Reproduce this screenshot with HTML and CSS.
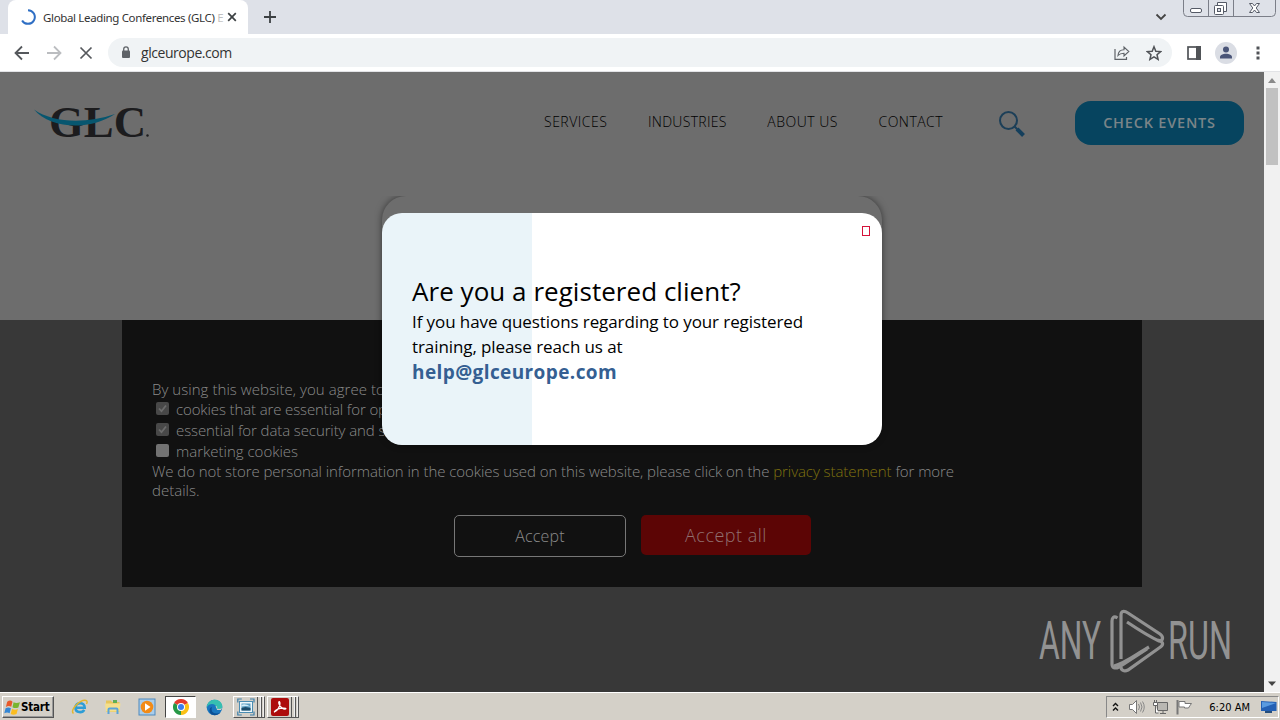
FILE: index.html
```html
<!DOCTYPE html>
<html lang="en">
<head>
<meta charset="utf-8">
<title>Global Leading Conferences (GLC) Europe</title>
<link rel="stylesheet" href="styles.css">
</head>
<body>
<div class="screen">
  <div class="tabstrip">
    <div class="tab">
      <svg class="spinner" width="16" height="16" viewBox="0 0 16 16"><path d="M8 1.200a6.800 6.800 0 1 1-5.900 10.200" fill="none" stroke="#2f6fc4" stroke-width="2"/></svg>
      <span class="tab-title">Global Leading Conferences (GLC) <span class="fade">E</span></span>
      <svg width="10" height="10" viewBox="0 0 10 10"><path d="M1.200 1.200l7.600 7.600M8.800 1.200L1.200 8.800" stroke="#3c4043" stroke-width="1.700"/></svg>
    </div>
    <svg class="newtab" width="12" height="12" viewBox="0 0 12 12"><path d="M6 0v12M0 6h12" stroke="#3c4043" stroke-width="1.800"/></svg>
    <svg class="tabsearch" width="12" height="8" viewBox="0 0 12 8"><path d="M1.500 1.500L6 6l4.500-4.500" fill="none" stroke="#444" stroke-width="1.800"/></svg>
    <svg class="winbtns" width="93" height="18" viewBox="0 0 93 18">
      <path d="M.5 0v12.500q0 4 4 4h84q4 0 4-4V0M25.500 0v16M50.500 0v16" fill="none" stroke="#7b7e88"/>
      <rect x="7.500" y="8.500" width="11" height="4" rx="1.500" fill="#fff" stroke="#555a66"/>
      <path d="M34.500 5.500v-3h9v9h-3" fill="#fff" stroke="#555a66"/><rect x="31.500" y="5.500" width="9" height="9" rx="1" fill="#fff" stroke="#555a66"/><rect x="34.500" y="8.500" width="3" height="3" fill="#dee1e8" stroke="#555a66"/>
      <path d="M66.500 3.500h3l2 2.500 2-2.500h3l-3.300 4.500 3.300 4.500h-3l-2-2.500-2 2.500h-3l3.300-4.500z" fill="#fff" stroke="#555a66"/>
    </svg>
  </div>
  <div class="toolbar">
    <svg width="16" height="16" viewBox="0 0 16 16"><path d="M15 8H2M8 1.500L1.500 8 8 14.500" fill="none" stroke="#55585c" stroke-width="1.800"/></svg>
    <svg width="16" height="16" viewBox="0 0 16 16"><path d="M1 8h13M8 1.500L14.500 8 8 14.500" fill="none" stroke="#bbbdc0" stroke-width="1.800"/></svg>
    <svg width="16" height="16" viewBox="0 0 16 16"><path d="M2.500 2.500l11 11M13.500 2.500l-11 11" stroke="#55585c" stroke-width="1.700"/></svg>
    <div class="omnibox">
      <svg width="10" height="13" viewBox="0 0 10 13"><rect x="1" y="4.500" width="8" height="7.500" rx="1" fill="#5f6368"/><path d="M2.700 5V3.200a2.300 2.300 0 0 1 4.600 0V5" fill="none" stroke="#5f6368" stroke-width="1.300"/></svg>
      <span class="url">glceurope.com</span>
      <svg width="16" height="16" viewBox="0 0 16 16"><path d="M1 4v10.300h11.500V12" fill="none" stroke="#5f6368" stroke-width="1.200"/><path d="M4 10.500c.3-4 2.500-5.800 6-5.800V2l4.800 4.500L10 11V8.200c-2.800 0-4.600.6-6 2.300z" fill="none" stroke="#5f6368" stroke-width="1.100"/></svg>
      <svg width="16" height="16" viewBox="0 0 16 16"><path d="M8 1.700l1.800 4.500 4.800.4L11 9.700l1.100 4.700L8 11.900l-4.100 2.500L5 9.700 1.400 6.600l4.800-.4z" fill="none" stroke="#505357" stroke-width="1.500"/></svg>
    </div>
    <svg class="panel" width="14" height="14" viewBox="0 0 14 14"><rect x="1" y="1" width="12" height="12" fill="#fff" stroke="#505357" stroke-width="1.700"/><path d="M9 0h5v14H9z" fill="#505357"/></svg>
    <svg class="avatar" width="22" height="22" viewBox="0 0 22 22"><circle cx="11" cy="11" r="11" fill="#dadde4"/><circle cx="11" cy="7.500" r="3" fill="#4a5578"/><path d="M5 16.500v-1.300C5 13 8 11.800 11 11.800s6 1.200 6 3.400v1.300z" fill="#4a5578"/></svg>
    <svg class="kebab" width="4" height="14" viewBox="0 0 4 14"><path d="M.500.500h3v3h-3zM.500 5.500h3v3h-3zM.500 10.500h3v3h-3z" fill="#505357"/></svg>
  </div>

  <div class="viewport">
    <main class="page">
      <header class="site-header">
        <svg class="glc" width="120" height="46" viewBox="0 0 120 46">
          <text class="glc-text" x="16" y="34.500" textLength="97" lengthAdjust="spacingAndGlyphs">GLC</text>
          <circle cx="114.500" cy="33.500" r="1.200" fill="#1c1c1e"/>
          <path d="M1 7.500c19 13.500 52 14.500 81 4.500C56 29.500 17 26.500 1 7.500z" fill="#07566f"/>
        </svg>
        <nav class="nav">
          <span class="n1">SERVICES</span><span class="n2">INDUSTRIES</span><span class="n3">ABOUT US</span><span class="n4">CONTACT</span>
        </nav>
        <svg class="search" width="28" height="28" viewBox="0 0 28 28"><circle cx="10.500" cy="10.500" r="8.500" fill="none" stroke="#1c3f58" stroke-width="2"/><path d="M16.500 16.500l3 3" stroke="#1c3f58" stroke-width="2"/><path d="M19 19l6.500 6.500" stroke="#143f5c" stroke-width="4"/></svg>
        <span class="cta">CHECK EVENTS</span>
      </header>
      <section class="cookies">
        <p><span class="c1">By using this website, you agree to</span></p>
        <div class="opt"><i class="box on"><svg width="13" height="13" viewBox="0 0 13 13"><path d="M3 6.500l2.500 2.700L10 3.500" fill="none" stroke="#6c6c6c" stroke-width="1.800"/></svg></i><span class="c2">cookies that are essential for op</span></div>
        <div class="opt"><i class="box on"><svg width="13" height="13" viewBox="0 0 13 13"><path d="M3 6.500l2.500 2.700L10 3.500" fill="none" stroke="#6c6c6c" stroke-width="1.800"/></svg></i><span class="c3">essential for data security and s</span></div>
        <div class="opt"><i class="box"></i><span class="c4">marketing cookies</span></div>
        <p class="store"><span class="c5">We do not store personal information in the cookies used on this website, please click on the <b>privacy statement</b> for more</span><br><span class="c6">details.</span></p>
        <div class="actions"><span class="accept">Accept</span><span class="accept-all">Accept all</span></div>
      </section>
      <div class="card-shadow"><div class="card-back"></div></div>
      <div class="modal">
        <svg class="close" width="8" height="10" viewBox="0 0 8 10"><rect x=".5" y=".5" width="7" height="9" fill="none" stroke="#d5123a"/></svg>
        <h1>Are you a registered client?</h1>
        <p class="m2">If you have questions regarding to your registered</p>
        <p class="m2">training, please reach us at</p>
        <p class="mail">help@glceurope.com</p>
      </div>
      <svg class="anyrun" width="202" height="76" viewBox="0 -5 202 76">
        <g fill="none" stroke="#929292" stroke-width="3.200">
          <path d="M80.500 9c-4-2.500-5.500 0-5.500 3v43c0 4 3 5 7 3l28-18"/>
          <path d="M84 50V6c0-4 3-4.500 7-2l32 21c4 3 3 7-1 7-11-5-20-11-32-19"/>
          <path d="M121 31c6 2 6 5 1 8L91 61c-4 2-7 0-7-3"/>
          <path d="M77 57c12-3 21-11 35-19"/>
        </g>
        <text class="any-text" x="2" y="50" textLength="62" lengthAdjust="spacingAndGlyphs">ANY</text>
        <text class="any-text" x="131" y="50" textLength="64" lengthAdjust="spacingAndGlyphs">RUN</text>
      </svg>
    </main>
    <div class="scrollbar">
      <svg width="16" height="16" viewBox="0 0 16 16"><path d="M4 11l4-5 4 5z" fill="#8a8a8a"/></svg>
      <div class="thumb"></div>
      <svg class="down" width="16" height="16" viewBox="0 0 16 16"><path d="M4 5.500h8l-4 4.500z" fill="#444"/></svg>
    </div>
  </div>

  <footer class="taskbar">
    <div class="start">
      <svg width="17" height="17" viewBox="0 0 16 16"><path d="M3 2.500q3-2 5 0L6.800 7.300q-2.500-1.500-5 .2z" fill="#e8592a"/><path d="M9 3q2.500 1.500 6 0l-1.500 5q-3 1.300-5.500-.3z" fill="#79b52f"/><path d="M1.500 8.800q2.500-1.700 5 0L5.300 13.300q-2.500-1.500-5 .2z" fill="#3486d4"/><path d="M7.600 9.200q2.500 1.500 5.500.3L11.800 14q-3 1.500-5.500 0z" fill="#fbbd20"/></svg>
      <span>Start</span>
    </div>
    <svg class="t-ie" width="18" height="18" viewBox="0 0 18 18"><path d="M4.500 9.700h9.200c0-6-9.200-6-9.200 0 0 5.500 7 5.300 8.700 2.200" fill="none" stroke="#2d9dd6" stroke-width="2.600"/><path d="M2.500 15.500C-2 12 10 1 15 2.500q2 .8.500 3.500" fill="none" stroke="#e2b52e" stroke-width="1.400"/></svg>
    <svg class="t-folder" width="18" height="18" viewBox="0 0 18 18"><path d="M2 2.500h5l1 1.500h7.500v10H2z" fill="#e6c55c"/><path d="M9 2h4v3H9z" fill="#5fae55"/><path d="M1 5.500h15.500l-1 8H2z" fill="#f5df8c"/><path d="M4.500 16v-4.500q0-1 1-1h7q1 0 1 1V16" fill="none" stroke="#5aa4d9" stroke-width="2"/></svg>
    <svg class="t-play" width="18" height="18" viewBox="0 0 18 18"><rect x="1" y="1" width="16" height="16" fill="#a9cdeb" stroke="#4e89bd"/><circle cx="9" cy="9" r="6.300" fill="#f28b18"/><path d="M7 5.300L12.500 9 7 12.700z" fill="#fff"/></svg>
    <div class="t-chrome">
      <svg width="16" height="16" viewBox="0 0 16 16"><path d="M8 8L1.070 4A8 8 0 0 1 14.930 4z" fill="#e33b2e"/><path d="M8 8l6.930-4A8 8 0 0 1 8 16z" fill="#fbc116"/><path d="M8 8v8A8 8 0 0 1 1.070 4z" fill="#279847"/><circle cx="8" cy="8" r="4" fill="#fff"/><circle cx="8" cy="8" r="3" fill="#3b7ded"/></svg>
    </div>
    <svg class="t-edge" width="17" height="17" viewBox="0 0 17 17"><circle cx="8.500" cy="8.500" r="7.800" fill="#1976bf"/><path d="M.700 8.500C1-1.500 16-2 16.300 7.500c0 4-5 4-6 2C11 4 3 3.500.700 8.500z" fill="#36bfb1"/><path d="M6 8c-2 6 4 8 8.500 5.500-4 4.500-11 3-11-2C3.500 9.500 4.500 8.300 6 8z" fill="#0b4f94"/><path d="M9.500 7c3 0 1 3 1.500 4h4l1-2c-2 1.500-5 1-5.500 0z" fill="#d4d0c8"/></svg>
    <div class="stack s-img">
      <svg width="18" height="18" viewBox="0 0 18 18"><rect x="2.500" y="3.500" width="13" height="11" fill="#eef8fc" stroke="#4b8db2"/><rect x="4.500" y="5.500" width="9" height="7" fill="#5b9dc0"/><path d="M4.500 10l4-1 5 1v2.500h-9z" fill="#1d4d6b"/><path d="M4.500 7q3-2 9 1.500-5-1-9 0z" fill="#d4eefa"/><path d="M.800 4.500V1h4M13 1h4v3.500M17 13.500V17h-4M4.800 17h-4v-3.500" fill="none" stroke="#3e7fa8" stroke-width="1.200"/></svg>
      <i></i><i></i>
    </div>
    <div class="stack s-pdf">
      <svg width="18" height="18" viewBox="0 0 18 18"><rect width="18" height="18" rx="2" fill="#ad0c0c"/><path d="M3.500 14C6 13.500 9.500 8 9 5s-2-1-.8 1.500S12.500 12 14.500 11s-4-1.500-8 .3c-2 .9-3.500 2.300-3 2.700z" fill="none" stroke="#fff" stroke-width="1.200"/></svg>
      <i></i><i></i>
    </div>
    <div class="tray">
      <svg width="7" height="10" viewBox="0 0 7 10"><path d="M1 4l2.500-2.500L6 4M1 8.500L3.500 6 6 8.500" fill="none" stroke="#111" stroke-width="1.400"/></svg>
      <svg width="17" height="16" viewBox="0 0 17 16"><path d="M1.500 5.500h3l4-4v13l-4-4h-3z" fill="#fff" stroke="#777"/><path d="M10.500 5q2 3 0 6M12.500 3.500q3 4.500 0 9M14.500 2.500q3.500 5.500 0 11" fill="none" stroke="#888"/></svg>
      <svg width="17" height="16" viewBox="0 0 17 16"><path d="M5.500 3.500h10v8h-10zM8 14.500h6M11 12v2" fill="#b9b7b2" stroke="#666"/><path d="M1.500 3.500h4v3h-4zM2.500 1v2M4.500 1v2M3.500 7v7h3" fill="#fff" stroke="#666"/></svg>
      <svg width="17" height="16" viewBox="0 0 17 16"><path d="M1.500 1v14.500" stroke="#777" stroke-width="2"/><path d="M3 2.500h6v2h6.500q-2 2.500-3 4.500H8.500V8H3z" fill="#fff" stroke="#777"/></svg>
      <span class="clock">6:20 AM</span>
      <svg width="16" height="14" viewBox="0 0 16 14"><path d="M0 1l15.500 1v9H0z" fill="#2460b4"/><path d="M1 2l14 1L1 8z" fill="#5a9be0"/><path d="M4 11h7v2H4z" fill="#264e7c"/></svg>
    </div>
  </footer>
</div>
</body>
</html>
```
FILE: styles.css
```css
* { box-sizing: border-box; }
body { margin: 0; }
p, h1 { margin: 0; font-weight: inherit; }
svg { display: block; flex: none; }
span, .modal p, .modal h1 { white-space: nowrap; }
.screen { width: 1280px; height: 720px; display: flex; flex-direction: column; overflow: hidden; font-family: "Open Sans", "Noto Sans", sans-serif; }

.tabstrip { height: 34px; background: #dee1e8; display: flex; align-items: flex-start; padding-left: 8px; }
.tab { width: 240px; height: 34px; background: #fff; border-radius: 8px 8px 0 0; display: flex; align-items: center; padding: 0 11px 0 12px; }
.spinner { margin-right: 7px; }
.tab-title { width: 184px; font-family: "Noto Sans", sans-serif; font-size: 11.500px; letter-spacing: -0.350px; color: #333; }
.tab-title .fade { opacity: .3; }
.newtab { margin: 11px 0 0 16px; }
.tabsearch { margin: 13px 16px 0 auto; }
.winbtns { margin-right: 4px; }

.toolbar { height: 38px; background: #fff; border-bottom: 1px solid #e2e3e6; display: flex; align-items: center; padding: 0 20px 0 14px; gap: 16px; }
.omnibox { flex: 1; margin-left: -2px; height: 29px; border-radius: 15px; background: #f0f3f5; display: flex; align-items: center; padding: 0 10px 0 13px; gap: 16px; }
.url { flex: 1; margin-left: -6px; font-size: 14px; color: #333; letter-spacing: -0.450px; }
.panel { margin-left: -1px; }
.avatar { margin-left: -2px; }
.kebab { margin-left: 3px; }

.viewport { height: 620px; display: flex; }
.page { width: 1264px; height: 620px; position: relative; background: #383838; overflow: hidden; }
.site-header { height: 248px; background: #6d6d6d; display: flex; align-items: flex-start; padding-left: 33px; }
.glc { margin-top: 30px; overflow: visible; }
.glc-text { font-family: "Liberation Serif", serif; font-weight: 700; font-size: 44px; fill: #1c1c1e; }
.nav { width: 399px; margin: 40px 0 0 391px; display: flex; justify-content: space-between; font-size: 14px; line-height: 20px; font-weight: 300; color: #000; }
.n1 { letter-spacing: .5px; }
.n2 { letter-spacing: .3px; }
.n3 { letter-spacing: .5px; }
.n4 { letter-spacing: .45px; }
.search { margin: 38px 0 0 55px; }
.cta { width: 169px; height: 44px; margin: 29px 0 0 49px; border-radius: 16px; background: #06445f; color: #7a8488; font: 600 14.500px/44px "Open Sans", sans-serif; letter-spacing: .8px; text-align: center; }

.cookies { width: 1020px; height: 267px; margin-left: 122px; padding: 60px 30px 0; background: #111; color: #8b8b8b; font-size: 15px; line-height: 19px; font-weight: 300; }
.opt { display: flex; align-items: center; height: 21px; gap: 7px; padding-left: 4px; }
.box { width: 13px; height: 13px; margin-top: -3px; border-radius: 2px; background: #727272; }
.box.on { background: #484848; }
.c1 { letter-spacing: .05px; }
.c2 { letter-spacing: -.12px; }
.c3 { letter-spacing: -.1px; }
.c5 { letter-spacing: -.065px; }
.store b { font-weight: 300; color: #80730f; }
.actions { display: flex; gap: 15px; margin: 15px 0 0 302px; }
.accept, .accept-all { text-align: center; border-radius: 5px; }
.accept { width: 172px; height: 42px; border: 1px solid #777; font-size: 16px; line-height: 40px; letter-spacing: .2px; }
.accept-all { width: 170px; height: 40px; background: #5c0505; color: #917070; font-size: 18px; line-height: 40px; letter-spacing: .5px; }

.card-shadow { position: absolute; left: 374px; top: 124px; width: 516px; height: 257px; overflow: hidden; }
.card-back { width: 500px; height: 249px; margin: 0 8px; border-radius: 24px; box-shadow: 0 0 7px rgba(0,0,0,.5); background: #6d6d6d; }
.modal { position: absolute; left: 382px; top: 141px; width: 500px; height: 232px; border-radius: 20px; background: linear-gradient(90deg, #eaf4f9 150px, #fff 150px); padding: 61px 30px 0; color: #000; font-size: 17px; line-height: 25px; }
.close { position: absolute; right: 12px; top: 13px; }
.modal h1 { font-size: 26px; line-height: 34px; letter-spacing: .040px; margin-bottom: 1px; }
.m2 { letter-spacing: -.090px; }
.mail { color: #355f92; font-weight: 700; font-size: 19px; line-height: 26px; letter-spacing: .4px; }
.anyrun { position: absolute; left: 1037px; top: 532px; overflow: visible; }
.any-text { font-family: Roboto, sans-serif; font-size: 53px; font-weight: 400; fill: #929292; }
.scrollbar { width: 16px; background: #f1f1f1; display: flex; flex-direction: column; align-items: center; }
.thumb { width: 12px; height: 77px; background: #c1c1c1; }
.down { margin-top: auto; }

.taskbar { height: 28px; background: #d4d0c8; border-top: 1px solid #fff; display: flex; align-items: center; padding: 1px 1px 0 2px; }
.start { width: 52px; height: 22px; border: 1px solid; border-color: #fff #555 #555 #fff; box-shadow: inset -1px -1px #999; display: flex; align-items: center; padding-left: 1px; font: 700 11.500px "DejaVu Sans Condensed", sans-serif; letter-spacing: -.2px; color: #000; }
.t-ie { margin-left: 17px; }
.t-folder { margin-left: 15px; }
.t-play { margin-left: 16px; }
.t-chrome { width: 31px; height: 22px; margin-left: 9px; background: #fff; border: 1px solid; border-color: #444 #fff #fff #444; display: flex; align-items: center; justify-content: center; }
.t-edge { margin-left: 10px; }
.stack { height: 22px; display: flex; align-items: center; border: 1px solid #fff; border-right-color: #555; border-bottom-color: #555; padding-left: 3px; }
.stack svg { margin-right: 2px; }
.stack i { width: 5px; height: 20px; border-left: 1px solid #555; border-right: 1px solid #eee; }
.s-img { margin-left: 10px; width: 32px; }
.s-pdf { margin-left: 2px; width: 32px; }
.tray { width: 173px; height: 22px; margin-left: auto; border: 1px solid; border-color: #888 #fff #fff #888; display: flex; align-items: center; padding: 0 1px 0 5px; gap: 7px; }
.tray svg:first-child { margin-right: 2px; }
.clock { flex: 1; text-align: right; font: 11px "DejaVu Sans Condensed", sans-serif; color: #000; margin-right: 4px; }
```
